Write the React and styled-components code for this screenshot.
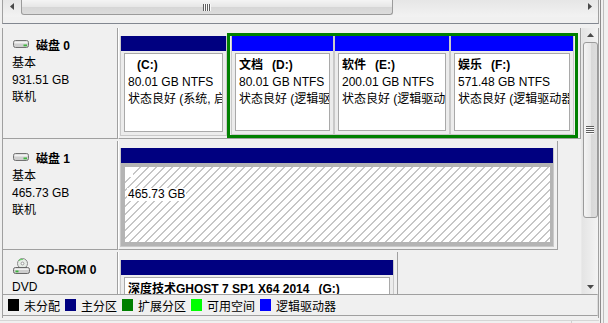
import React from "react";
import styled, { createGlobalStyle } from "styled-components";

const GlobalStyle = createGlobalStyle`
  * { box-sizing: border-box; }
  html, body { margin: 0; padding: 0; background: #f0f0f0; }
  body {
    font-family: "Liberation Sans", "Noto Sans CJK SC", sans-serif;
    font-size: 12px;
    color: #000;
  }
`;

const Screen = styled.div`
  width: 608px;
  height: 323px;
  overflow: hidden;
  display: flex;
  background: #f0f0f0;
`;

const Window = styled.div`
  width: 599px;
  display: flex;
  flex-direction: column;
`;

const EdgeStrip = styled.div`
  width: 4px;
  margin-left: 1px;
  border-left: 1px solid #8c8c8c;
  border-right: 1px solid #bdbdbd;
`;

/* ---- upper pane (only its scrollbar is visible) ---- */
const TopPane = styled.div`
  height: 24px;
  margin-left: 2px;
  flex: none;
  border-left: 1px solid #a0a0a0;
  border-right: 1px solid #a0a0a0;
  border-bottom: 1px solid #828790;
`;

const HScroll = styled.div`
  height: 17px;
  display: flex;
  background: linear-gradient(#e6e6e6, #f2f2f2);
`;

const ArrowBtn = styled.div`
  width: ${(p) => (p.$vertical ? "100%" : "17px")};
  height: ${(p) => (p.$vertical ? "14px" : "100%")};
  flex: none;
  display: flex;
  justify-content: center;
  align-items: ${(p) => (p.$vertical ? "center" : "flex-start")};
  padding-top: ${(p) => (p.$vertical ? "0" : "3px")};
`;

const HThumb = styled.div`
  width: 372px;
  height: 15px;
  margin-left: 1px;
  flex: none;
  border: 1px solid #9b9b9b;
  border-top: 0;
  border-radius: 0 0 3px 3px;
  background: linear-gradient(#f4f4f4, #e6e6e6 50%, #d6d6d6 51%, #dcdcdc);
  display: flex;
  justify-content: center;
  align-items: center;
`;

const Grip = styled.div`
  width: 8px;
  height: ${(p) => (p.$vertical ? "8px" : "7px")};
  background: repeating-linear-gradient(
    ${(p) => (p.$vertical ? "180deg" : "90deg")},
    #5f5f5f 0 1px,
    #fafafa 1px 2px
  );
`;

const Fill = styled.div`
  flex: 1;
`;

const Splitter = styled.div`
  height: 4px;
  flex: none;
`;

/* ---- lower pane: graphical disk view ---- */
const LowerPane = styled.div`
  margin-left: 2px;
  height: 290px;
  flex: none;
  display: flex;
  flex-direction: column;
  border-left: 1px solid #a0a0a0;
  border-right: 1px solid #a0a0a0;
`;

const ScrollArea = styled.div`
  height: 266px;
  flex: none;
  display: flex;
`;

const Content = styled.div`
  width: 578px;
  flex: none;
  overflow: hidden;
  display: flex;
  flex-direction: column;
  gap: 2px;
`;

const VScroll = styled.div`
  width: 17px;
  flex: none;
  display: flex;
  flex-direction: column;
  align-items: center;
  background: linear-gradient(90deg, #e4e4e4, #f3f3f3);
  border-left: 1px solid #e9e9e9;
`;

const VThumb = styled.div`
  width: 15px;
  height: 176px;
  flex: none;
  border: 1px solid #9b9b9b;
  border-radius: 3px;
  background: linear-gradient(90deg, #f4f4f4, #e8e8e8 50%, #d8d8d8 51%, #dedede);
  display: flex;
  justify-content: center;
  align-items: center;
`;

const Row = styled.div`
  height: ${(p) => p.$h}px;
  flex: none;
  display: flex;
`;

const Label = styled.div`
  width: 115px;
  flex: none;
  padding: 10px 0 0 9px;
  border-right: 1px solid #a0a0a0;
  border-bottom: 1px solid #a0a0a0;
  line-height: 17px;
  white-space: nowrap;
`;

const TitleLine = styled.div`
  display: flex;
  align-items: flex-start;
  gap: 7px;
  font-weight: 700;
`;

const IconBox = styled.span`
  display: flex;
  margin-left: 1px;
  margin-top: ${(p) => p.$mt}px;
`;

const PartArea = styled.div`
  width: ${(p) => p.$w}px;
  flex: none;
  display: flex;
  padding: 5px 2px 0 1px;
  border-left: 1px solid #fff;
  border-right: 1px solid #a0a0a0;
  border-bottom: 1px solid #a0a0a0;
`;

const Partition = styled.div`
  width: ${(p) => p.$w}px;
  flex: none;
  display: flex;
  flex-direction: column;
  border: 1px solid #c9c9c9;
  border-top: 0;
  margin: ${(p) => p.$m || "0"};
`;

const Extended = styled.div`
  width: ${(p) => p.$w}px;
  flex: none;
  display: flex;
  border: 3px solid #008000;
  padding-left: 1px;
`;

const Header = styled.div`
  height: 15px;
  flex: none;
  background: ${(p) => p.$color};
`;

const PartBody = styled.div`
  flex: 1;
  display: flex;
  padding: 2px 3px 3px;
  background: #ececec;
`;

const VolBox = styled.div`
  flex: 1;
  min-width: 0;
  background: #fff;
  border: 1px solid #a9a9a9;
  padding: 3px 0 0 3px;
  overflow: hidden;
  white-space: nowrap;
  line-height: 17px;
`;

const VolName = styled.div`
  font-weight: 700;
`;

const Drive = styled.span`
  margin-left: 9px;
`;

const UnallocBody = styled.div`
  flex: 1;
  display: flex;
  padding: 4px 3px 4px 4px;
  background: #b4b4b4;
`;

const Hatch = styled.div`
  flex: 1;
  padding-left: 2px;
  background: repeating-linear-gradient(
    135deg,
    #fff 0 4.7px,
    #c6c6c6 4.7px 5.66px
  );
`;

const Blank = styled.div`
  width: 8px;
  height: 10px;
  margin-left: -2px;
  background: #fff;
`;

const SizeTag = styled.span`
  display: inline-block;
  margin-top: 11px;
  padding: 0 1px;
  line-height: 13px;
  background: #fff;
`;

/* ---- legend & status ---- */
const Legend = styled.div`
  height: 22px;
  flex: none;
  display: flex;
  align-items: center;
  padding-left: 5px;
  border-top: 1px solid #a0a0a0;
  border-bottom: 1px solid #a0a0a0;
  border-right: 1px solid #dcdcdc;
`;

const LegendItem = styled.div`
  display: flex;
  align-items: center;
  gap: 5px;
  margin-right: 5px;
`;

const Swatch = styled.span`
  width: 11px;
  height: 12px;
  background: ${(p) => p.$color};
`;

const StatusBar = styled.div`
  flex: 1;
  margin-top: 2px;
  border-top: 1px solid #d5d5d5;
  display: flex;
`;

const StatusCell = styled.div`
  width: ${(p) => (p.$w ? `${p.$w}px` : "auto")};
  flex: ${(p) => (p.$w ? "none" : "1")};
  border-right: ${(p) => (p.$w ? "1px solid #d0d0d0" : "0")};
`;

function Tri({ dir }) {
  const pts = {
    up: "0,4 3.5,0 7,4",
    down: "0,0 3.5,4 7,0",
    left: "4,0 0,3.5 4,7",
    right: "0,0 4,3.5 0,7",
  }[dir];
  const vertical = dir === "up" || dir === "down";
  return (
    <svg width={vertical ? 7 : 4} height={vertical ? 4 : 7} viewBox={vertical ? "0 0 7 4" : "0 0 4 7"}>
      <polygon points={pts} fill="#4a4a4a" />
    </svg>
  );
}

function DiskIcon() {
  return (
    <svg width="16" height="8" viewBox="0 0 16 8">
      <rect x="0.5" y="0.5" width="15" height="7" rx="2" fill="#cfcfcf" stroke="#727272" />
      <rect x="1.5" y="1.5" width="13" height="2" fill="#f2f2f2" />
      <rect x="10.5" y="4.5" width="3.5" height="1.8" fill="#41b641" />
    </svg>
  );
}

function CdIcon() {
  return (
    <svg width="17" height="16" viewBox="0 0 17 16">
      <circle cx="9.5" cy="5.5" r="5" fill="#e6ece6" stroke="#8a8a8a" />
      <path d="M6 2.5 A4 4 0 0 1 10 1.5" stroke="#6fcf6f" strokeWidth="1.2" fill="none" />
      <circle cx="9.5" cy="5.5" r="1.4" fill="#fff" stroke="#9a9a9a" />
      <rect x="0.5" y="9.5" width="16" height="6" rx="2" fill="#cdcdcd" stroke="#676767" />
      <rect x="1.5" y="10.5" width="14" height="1.5" fill="#efefef" />
      <rect x="2.5" y="12.5" width="3" height="1.8" fill="#3cb43c" />
    </svg>
  );
}

function Volume({ w, color, label, drive, size, status, m }) {
  return (
    <Partition $w={w} $m={m}>
      <Header $color={color} />
      <PartBody>
        <VolBox>
          <VolName>
            {label}
            <Drive>{drive}</Drive>
          </VolName>
          {size && <div>{size}</div>}
          {status && <div>{status}</div>}
        </VolBox>
      </PartBody>
    </Partition>
  );
}

function DiskLabel({ icon, title, lines }) {
  return (
    <Label>
      <TitleLine>
        <IconBox $mt={icon === "cd" ? -4 : 2}>{icon === "cd" ? <CdIcon /> : <DiskIcon />}</IconBox>
        {title}
      </TitleLine>
      {lines.map((l) => (
        <div key={l}>{l}</div>
      ))}
    </Label>
  );
}

const logical = [
  { w: 103, label: "文档", drive: "(D:)", size: "80.01 GB NTFS" },
  { w: 116, label: "软件", drive: "(E:)", size: "200.01 GB NTFS" },
  { w: 124, label: "娱乐", drive: "(F:)", size: "571.48 GB NTFS" },
];

const legend = [
  ["#000000", "未分配"],
  ["#000080", "主分区"],
  ["#008000", "扩展分区"],
  ["#00ff00", "可用空间"],
  ["#0000ff", "逻辑驱动器"],
];

export default function App() {
  return (
    <Screen>
      <GlobalStyle />
      <Window>
        <TopPane>
          <HScroll>
            <ArrowBtn>
              <Tri dir="left" />
            </ArrowBtn>
            <HThumb>
              <Grip />
            </HThumb>
            <Fill />
            <ArrowBtn>
              <Tri dir="right" />
            </ArrowBtn>
          </HScroll>
        </TopPane>
        <Splitter />
        <LowerPane>
          <ScrollArea>
            <Content>
              <Row $h={111}>
                <DiskLabel icon="disk" title="磁盘 0" lines={["基本", "931.51 GB", "联机"]} />
                <PartArea $w={463}>
                  <Volume
                    w={107}
                    m="3px 0 2px"
                    color="#000080"
                    label=""
                    drive="(C:)"
                    size="80.01 GB NTFS"
                    status="状态良好 (系统, 启动, 页面文件, 活动, 故障转储, 主分区)"
                  />
                  <Extended $w={351}>
                    {logical.map((v) => (
                      <Volume key={v.drive} {...v} color="#0000ff" status="状态良好 (逻辑驱动器)" />
                    ))}
                  </Extended>
                </PartArea>
              </Row>
              <Row $h={109}>
                <DiskLabel icon="disk" title="磁盘 1" lines={["基本", "465.73 GB", "联机"]} />
                <PartArea $w={440}>
                  <Partition $w={434} $m="2px 0 2px">
                    <Header $color="#000080" />
                    <UnallocBody>
                      <Hatch>
                        <Blank />
                        <SizeTag>465.73 GB</SizeTag>
                      </Hatch>
                    </UnallocBody>
                  </Partition>
                </PartArea>
              </Row>
              <Row $h={109}>
                <DiskLabel icon="cd" title="CD-ROM 0" lines={["DVD"]} />
                <PartArea $w={280}>
                  <Volume
                    w={274}
                    m="3px 0 2px"
                    color="#000080"
                    label="深度技术GHOST 7 SP1 X64 2014"
                    drive="(G:)"
                  />
                </PartArea>
              </Row>
            </Content>
            <VScroll>
              <ArrowBtn $vertical>
                <Tri dir="up" />
              </ArrowBtn>
              <VThumb>
                <Grip $vertical />
              </VThumb>
              <Fill />
              <ArrowBtn $vertical>
                <Tri dir="down" />
              </ArrowBtn>
            </VScroll>
          </ScrollArea>
          <Legend>
            {legend.map(([c, t]) => (
              <LegendItem key={t}>
                <Swatch $color={c} />
                {t}
              </LegendItem>
            ))}
          </Legend>
        </LowerPane>
        <StatusBar>
          <StatusCell $w={572} />
          <StatusCell />
        </StatusBar>
      </Window>
      <EdgeStrip />
    </Screen>
  );
}
